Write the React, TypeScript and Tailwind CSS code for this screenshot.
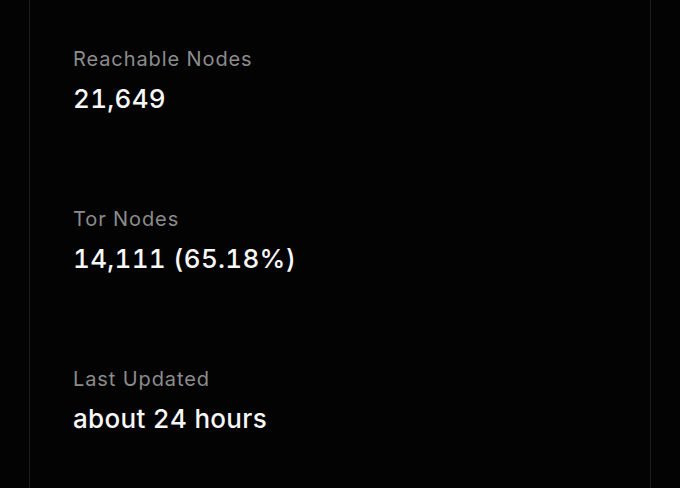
const stats = [
  { label: 'Reachable Nodes', value: '21,649' },
  { label: 'Tor Nodes', value: '14,111 (65.18%)' },
  { label: 'Last Updated', value: 'about 24 hours' },
]

export default function App() {
  return (
    <div className="h-[488px] w-full overflow-hidden bg-[#030303]" style={{ fontFamily: 'Inter, "Noto Sans", sans-serif' }}>
      <div className="mx-[29px] h-full w-[622px] border-x border-[#1c1c1c] px-[43px] pt-[45px]">
        <div className="flex flex-col gap-[88px]">
          {stats.map((s) => (
            <div key={s.label} className="flex flex-col">
              <span className="text-[20px] leading-[28px] tracking-[0.9px] text-[#8c8c8c]">{s.label}</span>
              <span className="mt-2 text-[26px] font-medium leading-[36px] tracking-[0.3px] tabular-nums text-[#f7f7f7]">
                {s.value}
              </span>
            </div>
          ))}
        </div>
      </div>
    </div>
  )
}
